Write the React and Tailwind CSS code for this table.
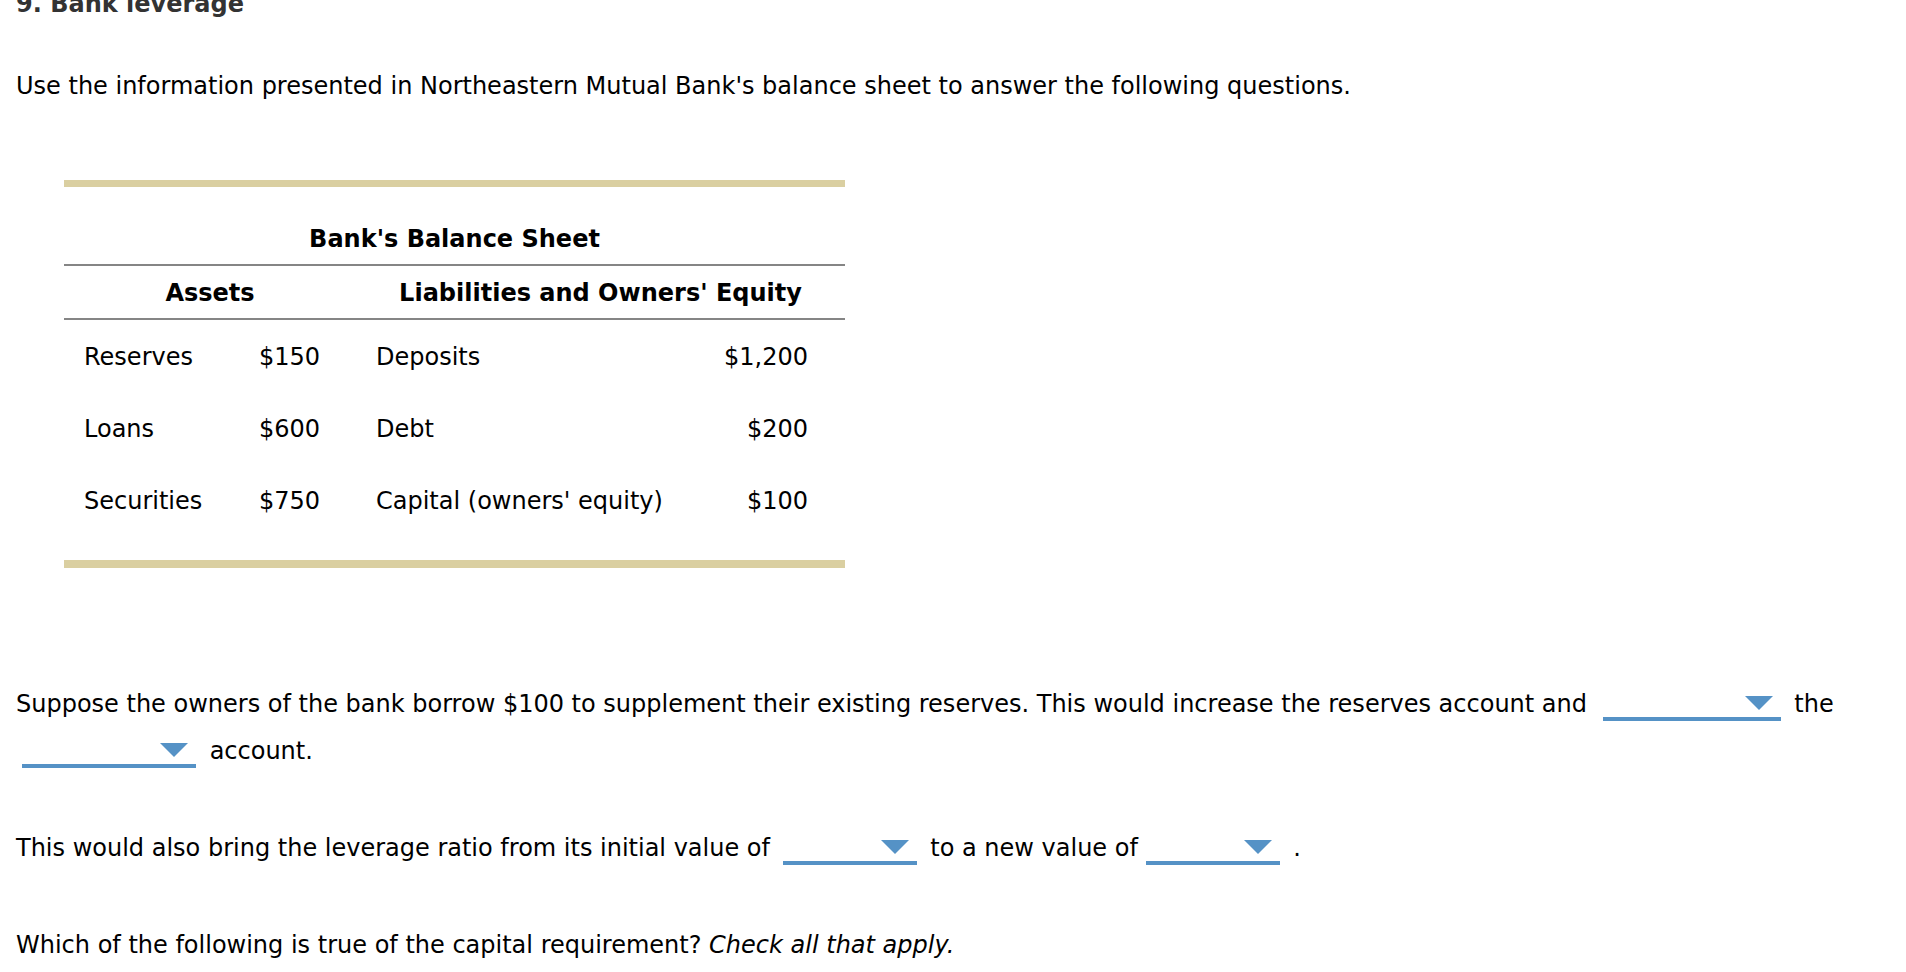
import React from "react";

const rows = [
  ["Reserves", "$150", "Deposits", "$1,200"],
  ["Loans", "$600", "Debt", "$200"],
  ["Securities", "$750", "Capital (owners' equity)", "$100"],
];

// blank dropdown: blue underline + triangle on the right
const Dropdown = ({ width }) => (
  <span
    className={`relative inline-block h-[30px] border-b-[4px] border-[#5592c6] align-[-9px] ${width}`}
  >
    <svg
      width="28"
      height="14"
      viewBox="0 0 28 14"
      className="absolute right-[8px] top-[5px]"
    >
      <polygon points="0,0 28,0 14,14" fill="#5592c6" />
    </svg>
  </span>
);

const App = () => {
  return (
    <div className="min-h-screen bg-white px-4 text-black font-['DejaVu_Sans','Liberation_Sans',sans-serif] overflow-hidden">
      <h2 className="mt-[-10px] text-[24px] leading-[29px] font-bold text-[#333]">
        9. Bank leverage
      </h2>

      <p className="mt-[52px] text-[24px] leading-[30px]">
        Use the information presented in Northeastern Mutual Bank's balance
        sheet to answer the following questions.
      </p>

      {/* Balance sheet */}
      <div className="ml-[48px] mt-[79px] w-[781px] text-[24px]">
        <div className="h-[7px] bg-[#dacfa1]" />
        <div className="pt-[37px] pb-[10px] text-center font-bold leading-[30px]">
          Bank's Balance Sheet
        </div>
        <div className="h-[2px] bg-[#858585]" />
        <div className="grid h-[52px] grid-cols-[292px_489px] items-center pt-[2px] font-bold">
          <div className="text-center">Assets</div>
          <div className="text-center">Liabilities and Owners' Equity</div>
        </div>
        <div className="h-[2px] bg-[#858585]" />
        <div className="pb-[24px]">
          {rows.map((r) => (
            <div
              key={r[0]}
              className="grid h-[72px] grid-cols-[175px_117px_349px_140px] items-center pt-[2px]"
            >
              <div className="pl-5">{r[0]}</div>
              <div className="pl-5">{r[1]}</div>
              <div className="pl-5">{r[2]}</div>
              <div className="pr-[37px] text-right">{r[3]}</div>
            </div>
          ))}
        </div>
        <div className="h-[8px] bg-[#dacfa1]" />
      </div>

      <p className="mt-[113px] text-[24px] leading-[47px]">
        Suppose the owners of the bank borrow $100 to supplement their existing
        reserves. This would increase the reserves account and{" "}
        <Dropdown width="w-[178px] ml-[8px] mr-[6px]" /> the{" "}
        <Dropdown width="w-[174px] ml-[6px] mr-[6px]" /> account.
      </p>

      <p className="mt-[50px] text-[24px] leading-[47px]">
        This would also bring the leverage ratio from its initial value of{" "}
        <Dropdown width="w-[134px] ml-[5px] mr-[6px]" /> to a new value of{" "}
        <Dropdown width="w-[134px] mr-[6px]" /> .
      </p>

      <p className="mt-[50px] text-[24px] leading-[47px]">
        Which of the following is true of the capital requirement?{" "}
        <i>Check all that apply.</i>
      </p>
    </div>
  );
};

export default App;
